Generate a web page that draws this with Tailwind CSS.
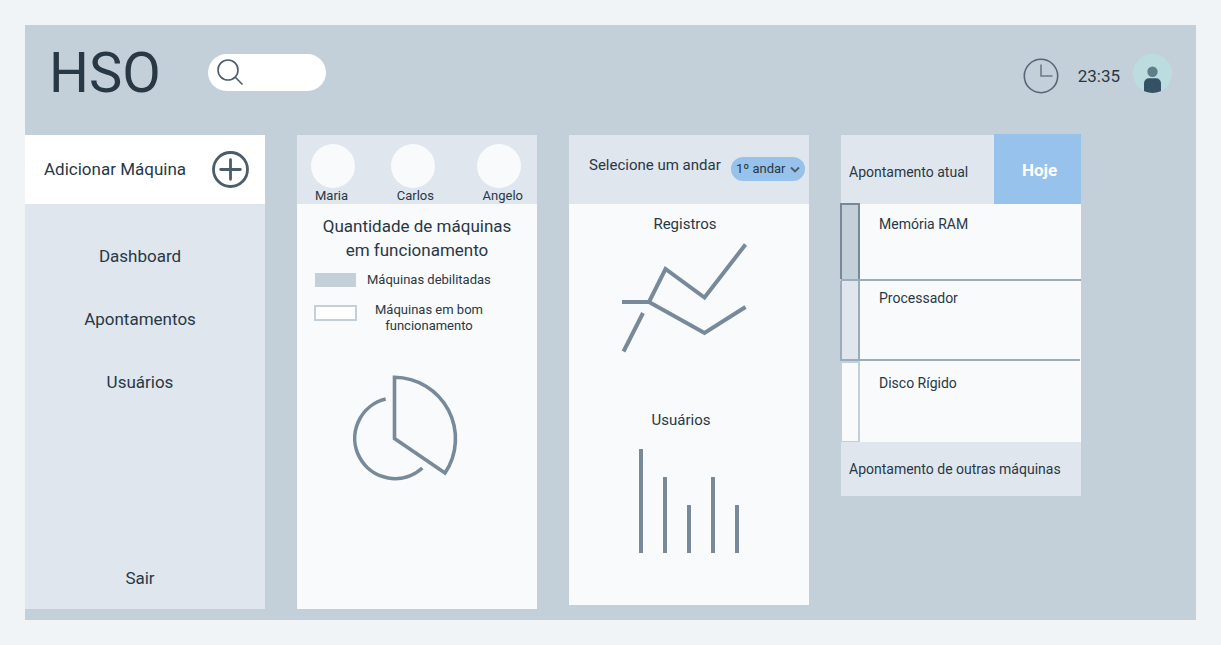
<!DOCTYPE html>
<html lang="pt-BR">
<head>
<meta charset="utf-8">
<meta name="viewport" content="width=device-width, initial-scale=1">
<title>HSO</title>
<script src="https://cdn.jsdelivr.net/npm/@tailwindcss/browser@4"></script>
</head>
<body class="flex min-h-screen flex-col bg-[#f0f4f7] p-[25px] font-[Roboto,sans-serif] text-[#293845]">
<div class="flex flex-1 flex-col bg-[#c3cfd9]">
  <header class="flex h-[110px] items-start pr-6 pl-6">
    <h1 class="mt-4 w-[159px] text-[56px] leading-16">HSO</h1>
    <label class="mt-[29px] flex h-[37px] w-[118px] items-center rounded-full bg-white pl-2">
      <svg class="size-7 shrink-0" viewBox="0 0 28 28" fill="none" stroke="#4b5c6b" stroke-width="1.6"><circle cx="12" cy="11" r="10"/><path d="M19 18 26.500 25.500"/></svg>
      <input type="search" aria-label="Pesquisar" class="w-full min-w-0 bg-transparent px-2 text-[14px] outline-none">
    </label>
    <div class="mt-[29px] ml-auto flex items-center">
      <svg class="mt-1 size-9" viewBox="0 0 36 36" fill="none" stroke="#566675" stroke-width="1.6"><circle cx="18" cy="18" r="16.7"/><path stroke="#6b7b89" d="M18 6.5V18h11.5"/></svg>
      <time class="mt-1 ml-[19px] text-[17px] leading-6">23:35</time>
      <button aria-label="Perfil" class="ml-3 size-10">
        <svg viewBox="0 0 40 40"><clipPath id="face"><circle cx="20.500" cy="19.500" r="19.500"/></clipPath><g clip-path="url(#face)"><path fill="#bcdde0" d="M0 0h40v40H0z"/><circle cx="20.500" cy="17.800" r="5.200" fill="#5d7f87"/><rect x="12" y="24.2" width="17" height="20" rx="5" fill="#345263"/></g></svg>
      </button>
    </div>
  </header>

  <div class="grid flex-1 grid-cols-4 gap-8 pr-[115px] pb-[11px]">
    <aside class="flex flex-col bg-[#dfe6ee]">
      <button class="flex h-[69px] items-center justify-between bg-white pr-4 pl-[19px] text-[17px]">
        Adicionar Máquina
        <svg class="size-[37px]" viewBox="0 0 37 37" fill="none" stroke="#4b5c6b" stroke-width="2.8" stroke-linecap="round"><circle cx="18.5" cy="18.5" r="17"/><path d="M18.5 8.7v19.6M8.7 18.5h19.6"/></svg>
      </button>
      <nav class="flex flex-1 flex-col items-center gap-[39px] pt-10 pr-[10px] pb-[19px] text-[17px] leading-6">
        <a href="#dashboard">Dashboard</a>
        <a href="#apontamentos">Apontamentos</a>
        <a href="#usuarios">Usuários</a>
        <a href="#sair" class="mt-auto">Sair</a>
      </nav>
    </aside>

    <section class="bg-[#f8fafc]">
      <div class="h-[69px] bg-[#dfe6ee] pt-[9px]">
        <div class="flex justify-between pr-4 pl-[14px]">
          <div class="flex gap-9"><span class="size-11 rounded-full bg-[#f8fafc]"></span><span class="size-11 rounded-full bg-[#f8fafc]"></span></div>
          <span class="size-11 rounded-full bg-[#f8fafc]"></span>
        </div>
        <div class="flex justify-between pr-[14px] pl-[18px] text-[13px] leading-4"><span>Maria</span><span>Carlos</span><span>Angelo</span></div>
      </div>
      <h2 class="mt-[10px] text-center text-[17px] leading-6">Quantidade de máquinas<br>em funcionamento</h2>
      <ul class="mt-[10px] flex flex-col gap-[14px] pl-[17px] text-[13px] leading-4">
        <li class="flex items-center gap-[10px]"><span class="h-[14px] w-[43px] border-x border-[#f8fafc] bg-[#c3cfd9]"></span>Máquinas debilitadas</li>
        <li class="flex items-start gap-[18px]"><span class="mt-[3px] h-4 w-[43px] border-2 border-[#c3cfd9] bg-white"></span><span class="text-center">Máquinas em bom<br>funcionamento</span></li>
      </ul>
      <svg class="mx-auto mt-10 h-[108px] w-[110px] -translate-x-3" viewBox="350 374 110 108" fill="none" stroke="#788a99" stroke-width="3.6" role="img" aria-label="Quantidade de máquinas em funcionamento"><path d="M394.500 377.200V438.500L445 473A61.500 61.500 0 0 0 394.500 377.200Z"/><path d="M385.700 399.100A40.300 40.300 0 1 0 422.300 468"/></svg>
    </section>

    <section class="mb-1 bg-[#f8fafc] text-[15px] leading-5">
      <div class="flex h-[69px] items-start justify-between bg-[#dfe6ee] pr-1 pl-5">
        <label for="andar" class="mt-5">Selecione um andar</label>
        <div class="relative mt-[22px]">
          <select id="andar" class="block h-6 w-[74px] appearance-none rounded-full bg-[#96c2ec] pl-[5px] text-[13px] leading-6"><option>1º andar</option></select>
          <svg class="pointer-events-none absolute top-2 right-[5px] size-[10px]" viewBox="0 0 10 10" fill="none" stroke="#4b5c6b" stroke-width="1.8"><path d="M1 2.500 5 6.500 9 2.500"/></svg>
        </div>
      </div>
      <h2 class="mt-[10px] pr-2 text-center">Registros</h2>
      <svg class="mx-auto mt-2 h-[112px] w-[130px] -translate-x-[5px]" viewBox="619 242 130 112" fill="none" stroke="#788a99" stroke-width="4" role="img" aria-label="Registros"><path d="M622 302H649L665.500 269 704.500 297.500 745.500 244.500M649 302 704.500 333 745.500 307M643 313 623.500 351.500"/></svg>
      <h2 class="mt-14 pr-4 text-center">Usuários</h2>
      <div role="img" aria-label="Usuários" class="mt-[19px] flex h-[104px] items-end justify-center gap-5">
        <span class="h-[104px] w-1 bg-[#788a99]"></span><span class="h-[76px] w-1 bg-[#788a99]"></span><span class="h-12 w-1 bg-[#788a99]"></span><span class="h-[76px] w-1 bg-[#788a99]"></span><span class="h-12 w-1 bg-[#788a99]"></span>
      </div>
    </section>

    <section class="self-start bg-[#f8fafc] text-[14px] leading-5">
      <div class="flex h-[69px] bg-[#dfe6ee]">
        <h2 class="mt-[27px] flex-1 pl-2">Apontamento atual</h2>
        <button class="-mt-px w-[87px] bg-[#96c2ec] pt-[2px] pl-1 text-[17px] font-bold text-white">Hoje</button>
      </div>
      <ul>
        <li class="flex h-[77px] border-b-2 border-[#9aacba]"><span class="-mt-px -ml-px w-5 border-2 border-b-0 border-[#788896] bg-[#c3cfd9]"></span><h3 class="pt-[10px] pl-[19px]">Memória RAM</h3></li>
        <li class="flex h-20"><span class="-ml-px w-5 border-2 border-t-0 border-[#9aacba] bg-[#dfe6ee]"></span><h3 class="mr-px flex-1 border-b-2 border-[#9aacba] pt-[7px] pl-[19px]">Processador</h3></li>
        <li class="flex h-[81px]"><span class="-ml-px w-5 border-2 border-b border-[#c3cfd9]"></span><h3 class="pt-3 pl-[19px]">Disco Rígido</h3></li>
      </ul>
      <a href="#outras" class="flex h-[54px] items-center bg-[#dfe6ee] pl-2">Apontamento de outras máquinas</a>
    </section>
  </div>
</div>
</body>
</html>
